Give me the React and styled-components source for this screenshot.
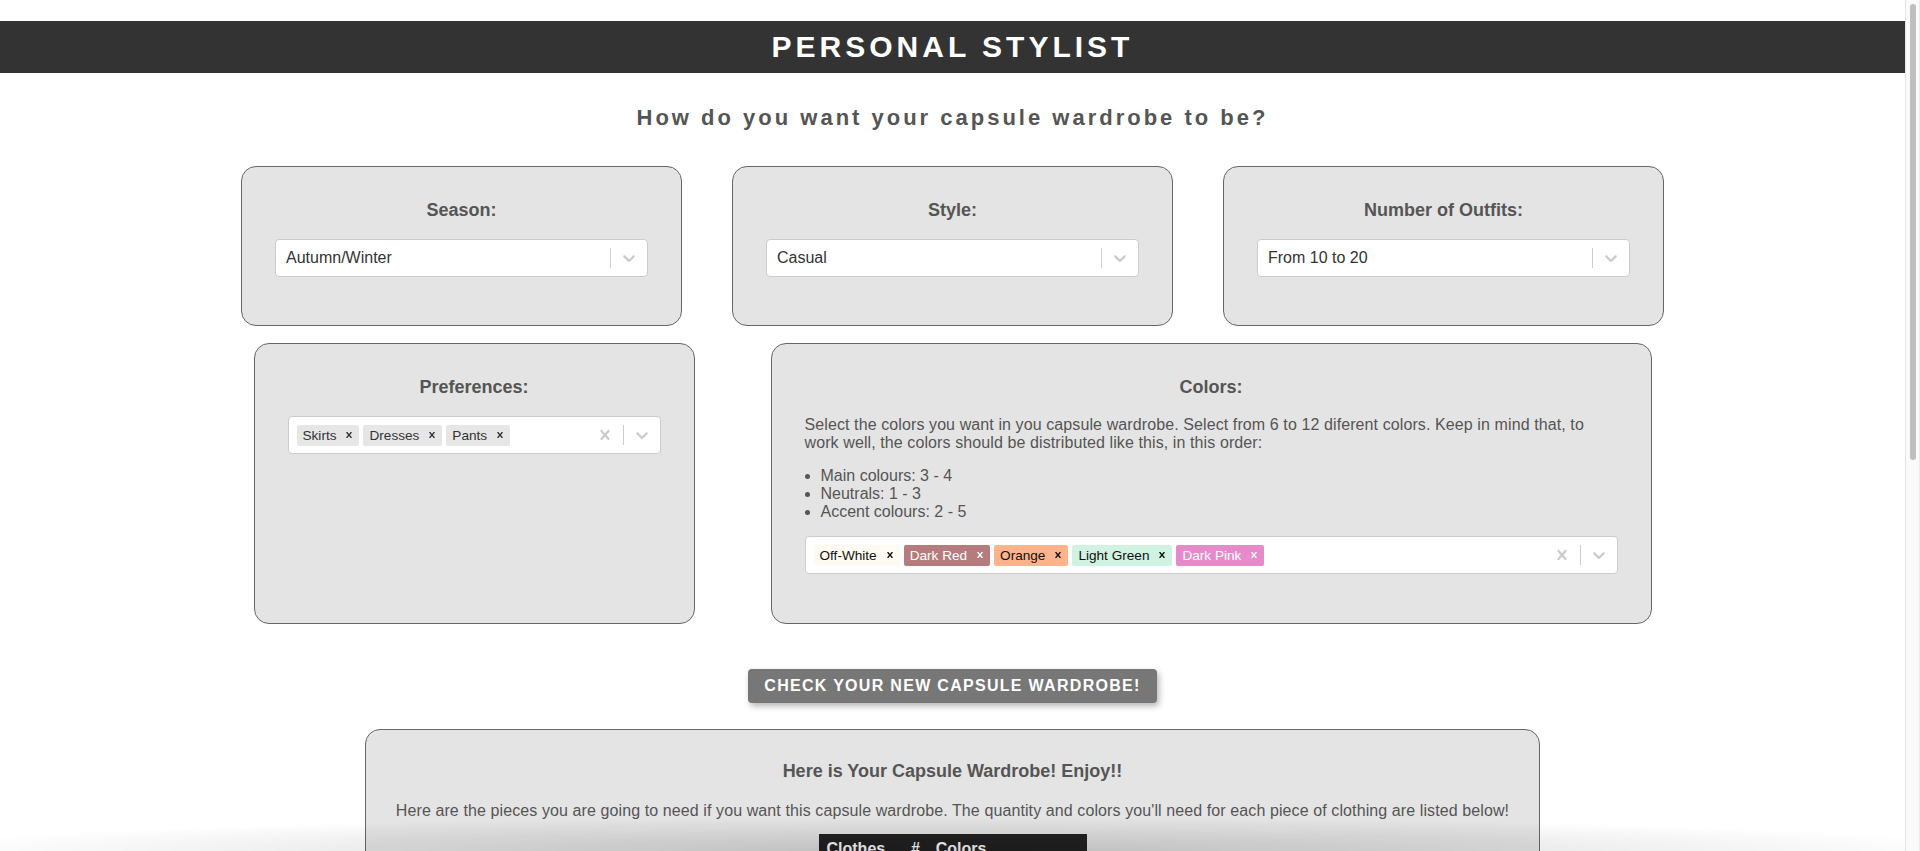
import styled, { createGlobalStyle } from 'styled-components';

const GlobalStyle = createGlobalStyle`
  body {
    margin: 0;
    background: #fff;
    font-family: "Liberation Sans", Arial, sans-serif;
    color: #555;
  }
`

const Frame = styled.div`
  display: flex;
  height: 100vh;
  overflow: hidden;
`

const Page = styled.main`
  flex: 1;
  min-width: 0;
  overflow-y: auto;
  scrollbar-width: none;
`

const ScrollTrack = styled.aside`
  box-sizing: border-box;
  width: 15px;
  padding: 4px 3px 0 4px;
  background: #fafafa;
  border-left: 1px solid #e4e4e4;
  border-right: 1px solid #ececec;
`

const ScrollThumb = styled.div`
  height: 456px;
  border-radius: 4px;
  background: #bfbfbf;
`

const Header = styled.header`
  margin-top: 21px;
  height: 52px;
  background: #333;
  display: flex;
  align-items: center;
  justify-content: center;
`

const Title = styled.h1`
  margin: 0;
  color: #fff;
  font-size: 30px;
  font-weight: 700;
  letter-spacing: 4px;
`

const Question = styled.h2`
  margin: 32px 0 0;
  text-align: center;
  font-size: 22px;
  font-weight: 700;
  letter-spacing: 3px;
  color: #555;
  line-height: 25px;
`

const Row = styled.div`
  display: flex;
  justify-content: center;
  gap: ${p => p.$gap}px;
  margin-top: ${p => p.$top}px;
`

const Card = styled.section`
  box-sizing: border-box;
  width: ${p => p.$width}px;
  height: ${p => p.$height}px;
  padding: 33px 33px 0;
  background: #e4e4e4;
  border: 1px solid #666;
  border-radius: 15px;
`

const Label = styled.h3`
  margin: 0 0 18px;
  text-align: center;
  font-size: 18px;
  line-height: 21px;
  font-weight: 700;
  color: #555;
`

const Text = styled.p`
  margin: 15px 0;
  font-size: 16px;
  line-height: 18px;
  letter-spacing: 0.1px;
  color: #555;
`

const List = styled.ul`
  margin: 15px 0;
  padding-left: 16px;
  font-size: 16px;
  line-height: 18px;
  color: #555;
`

const Control = styled.div`
  box-sizing: border-box;
  height: 38px;
  display: flex;
  align-items: center;
  background: #fff;
  border: 1px solid #ccc;
  border-radius: 4px;
`

const Values = styled.div`
  flex: 1;
  display: flex;
  align-items: center;
  flex-wrap: wrap;
  padding: 2px 8px;
  gap: 4px;
  font-size: 16px;
  color: #333;
`

const SingleValue = styled.span`
  margin-left: 2px;
`

const Tag = styled.div`
  display: flex;
  align-items: center;
  height: 21px;
  border-radius: 2px;
  background: ${p => p.$bg || '#e6e6e6'};
  color: ${p => p.$fg || '#333'};
  font-size: 13.6px;
`

const TagLabel = styled.span`
  padding: 0 3px 0 6px;
`

const TagRemove = styled.span`
  display: flex;
  align-items: center;
  padding: 0 4px;
  height: 100%;
`

const Indicators = styled.div`
  display: flex;
  align-items: center;
  align-self: stretch;
`

const Indicator = styled.div`
  display: flex;
  padding: 8px;
  color: #ccc;
`

const Separator = styled.span`
  width: 1px;
  align-self: stretch;
  margin: 8px 0;
  background: #ccc;
`

const CheckButton = styled.button`
  display: block;
  margin: 45px auto 0;
  height: 34px;
  padding: 0 16px;
  border: none;
  border-radius: 4px;
  background: #777;
  color: #fff;
  font-family: "Liberation Sans", Arial, sans-serif;
  font-size: 16px;
  font-weight: 700;
  letter-spacing: 1.3px;
  box-shadow: 2px 3px 6px rgba(0, 0, 0, 0.3);
`

const Result = styled.section`
  box-sizing: border-box;
  width: 1175px;
  margin: 26px auto 40px;
  padding: 30px 24px 40px;
  background: #e4e4e4;
  border: 1px solid #666;
  border-radius: 15px;
  text-align: center;
`

const ResultTitle = styled.h3`
  margin: 0;
  font-size: 18px;
  line-height: 22px;
  font-weight: 700;
  color: #555;
`

const ResultText = styled.p`
  margin: 20px 0 14px;
  font-size: 16px;
  line-height: 18px;
  letter-spacing: 0.1px;
`

const Table = styled.table`
  margin: 0 auto;
  width: 268px;
  border-collapse: collapse;
  text-align: left;
  font-size: 15px;
`

const Th = styled.th`
  background: #222;
  color: #fff;
  padding: 6px 8px;
  font-size: 16px;
`

const Td = styled.td`
  padding: 6px 8px;
  background: #fff;
  color: #333;
  border-bottom: 1px solid #ccc;
`

const BottomShade = styled.div`
  position: fixed;
  left: 0;
  right: 15px;
  bottom: 0;
  height: 34px;
  pointer-events: none;
  background: radial-gradient(ellipse 55% 100% at 50% 100%, rgba(0, 0, 0, 0.16), rgba(0, 0, 0, 0));
`

const Chevron = () => (
  <svg width="20" height="20" viewBox="0 0 20 20" fill="currentColor">
    <path d="M4.516 7.548c0.436-0.446 1.043-0.481 1.576 0l3.908 3.747 3.908-3.747c0.533-0.481 1.141-0.446 1.574 0 0.436 0.445 0.408 1.197 0 1.615-0.406 0.418-4.695 4.502-4.695 4.502-0.217 0.223-0.502 0.335-0.787 0.335s-0.57-0.112-0.789-0.335c0 0-4.287-4.084-4.695-4.502s-0.436-1.170 0-1.615z" />
  </svg>
)

const Cross = ({ size = 20 }) => (
  <svg width={size} height={size} viewBox="0 0 20 20" fill="currentColor">
    <path d="M14.348 14.849c-0.469 0.469-1.229 0.469-1.697 0l-2.651-3.030-2.651 3.029c-0.469 0.469-1.229 0.469-1.697 0-0.469-0.469-0.469-1.229 0-1.697l2.758-3.15-2.759-3.152c-0.469-0.469-0.469-1.228 0-1.697s1.228-0.469 1.697 0l2.652 3.031 2.651-3.031c0.469-0.469 1.228-0.469 1.697 0s0.469 1.229 0 1.697l-2.758 3.152 2.758 3.15c0.469 0.469 0.469 1.229 0 1.698z" />
  </svg>
)

function Select({ value, tags }) {
  return (
    <Control>
      <Values>
        {tags
          ? tags.map(t => (
              <Tag key={t.label} $bg={t.bg} $fg={t.fg}>
                <TagLabel>{t.label}</TagLabel>
                <TagRemove><Cross size={12} /></TagRemove>
              </Tag>
            ))
          : <SingleValue>{value}</SingleValue>}
      </Values>
      <Indicators>
        {tags && <Indicator><Cross /></Indicator>}
        <Separator />
        <Indicator><Chevron /></Indicator>
      </Indicators>
    </Control>
  );
}

const preferences = [{ label: 'Skirts' }, { label: 'Dresses' }, { label: 'Pants' }];

const colors = [
  { label: 'Off-White', bg: '#fffaf2', fg: '#111' },
  { label: 'Dark Red', bg: '#b47c7d', fg: '#fff' },
  { label: 'Orange', bg: '#fdb38b', fg: '#111' },
  { label: 'Light Green', bg: '#d0f2e2', fg: '#111' },
  { label: 'Dark Pink', bg: '#e68bca', fg: '#fff' },
];

const wardrobe = [
  ['T-shirts', 3, 'Off-White, Light Green'],
  ['Blouses', 2, 'Dark Pink'],
  ['Sweaters', 2, 'Dark Red, Orange'],
  ['Cardigans', 1, 'Off-White'],
  ['Skirts', 2, 'Dark Red'],
  ['Dresses', 2, 'Dark Pink, Orange'],
  ['Pants', 2, 'Off-White'],
  ['Jackets', 1, 'Dark Red'],
  ['Coats', 1, 'Off-White'],
  ['Boots', 1, 'Dark Red'],
  ['Sneakers', 1, 'Off-White'],
  ['Flats', 1, 'Orange'],
  ['Scarves', 2, 'Light Green'],
  ['Bags', 1, 'Dark Red'],
  ['Belts', 1, 'Off-White'],
  ['Hats', 1, 'Dark Pink'],
  ['Tights', 2, 'Dark Red'],
];

function App() {
  return (
    <Frame>
      <GlobalStyle />
      <Page>
        <Header>
          <Title>PERSONAL STYLIST</Title>
        </Header>
        <Question>How do you want your capsule wardrobe to be?</Question>

        <Row $gap={50} $top={36}>
          <Card $width={441} $height={160}>
            <Label>Season:</Label>
            <Select value="Autumn/Winter" />
          </Card>
          <Card $width={441} $height={160}>
            <Label>Style:</Label>
            <Select value="Casual" />
          </Card>
          <Card $width={441} $height={160}>
            <Label>Number of Outfits:</Label>
            <Select value="From 10 to 20" />
          </Card>
        </Row>

        <Row $gap={76} $top={17}>
          <Card $width={441} $height={281}>
            <Label>Preferences:</Label>
            <Select tags={preferences} />
          </Card>
          <Card $width={881} $height={281}>
            <Label>Colors:</Label>
            <Text>
              Select the colors you want in you capsule wardrobe. Select from 6 to 12 diferent colors. Keep in mind that, to work well, the colors should be distributed like this, in this order:
            </Text>
            <List>
              <li>Main colours: 3 - 4</li>
              <li>Neutrals: 1 - 3</li>
              <li>Accent colours: 2 - 5</li>
            </List>
            <Select tags={colors} />
          </Card>
        </Row>

        <CheckButton>CHECK YOUR NEW CAPSULE WARDROBE!</CheckButton>

        <Result>
          <ResultTitle>Here is Your Capsule Wardrobe! Enjoy!!</ResultTitle>
          <ResultText>
            Here are the pieces you are going to need if you want this capsule wardrobe. The quantity and colors you'll need for each piece of clothing are listed below!
          </ResultText>
          <Table>
            <thead>
              <tr>
                <Th>Clothes</Th>
                <Th>#</Th>
                <Th>Colors</Th>
              </tr>
            </thead>
            <tbody>
              {wardrobe.map(([item, qty, cols]) => (
                <tr key={item}>
                  <Td>{item}</Td>
                  <Td>{qty}</Td>
                  <Td>{cols}</Td>
                </tr>
              ))}
            </tbody>
          </Table>
        </Result>
        <BottomShade />
      </Page>
      <ScrollTrack>
        <ScrollThumb />
      </ScrollTrack>
    </Frame>
  );
}

export default App;
